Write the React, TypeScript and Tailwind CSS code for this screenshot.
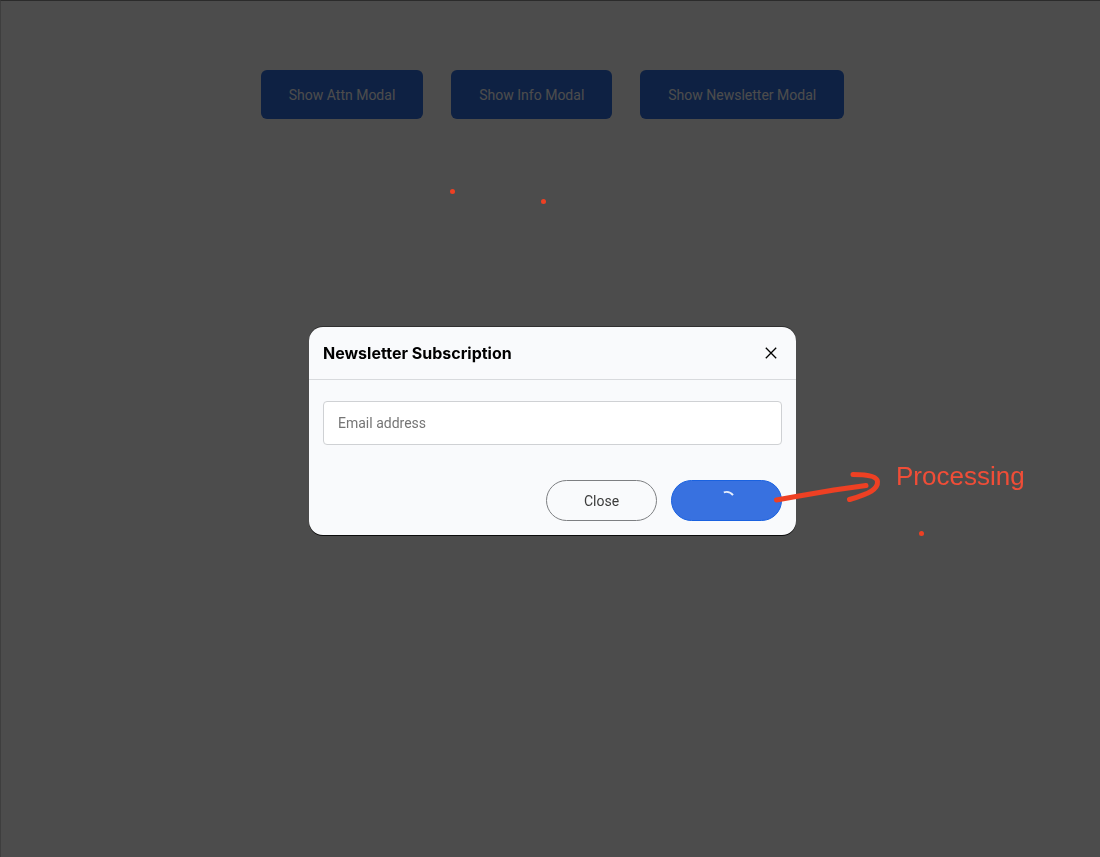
import { useState } from 'react';

const triggers = ['Show Attn Modal', 'Show Info Modal', 'Show Newsletter Modal'];

function Spinner() {
  return (
    <svg viewBox="0 0 20 20" className="size-5" fill="none" aria-hidden="true">
      <path d="M6.8 3.3 Q12.5 1.6 16 6.2" stroke="#e6eefc" strokeWidth="1.9" />
    </svg>
  );
}

function CloseIcon() {
  return (
    <svg viewBox="0 0 12 12" className="size-3" fill="none" stroke="#000" strokeWidth="1.3" aria-hidden="true">
      <path d="M0.8 0.8 L11.2 11.2 M11.2 0.8 L0.8 11.2" />
    </svg>
  );
}

function Dot({ className }: { className: string }) {
  return <span className={`absolute size-[5px] rounded-full bg-[#ee4023] ${className}`} />;
}

function Annotations() {
  return (
    <div className="pointer-events-none absolute inset-0">
      <Dot className="left-[141px] -top-[138px]" />
      <Dot className="left-[232px] -top-[128px]" />
      <Dot className="left-[610px] top-[204px]" />
      <svg
        viewBox="0 0 112 36"
        className="absolute left-[463px] top-[142px] h-9 w-28"
        fill="none"
        stroke="#ee4023"
        strokeWidth="5"
        strokeLinecap="round"
        strokeLinejoin="round"
        aria-hidden="true"
      >
        <path d="M4.5 31 L24 27.5 L62 21 L94 16.5" />
        <path d="M81 5.5 C94 5.5 105 7 105.500 12.5 C106 20 98 24.5 77.500 30.500" />
      </svg>
      <span className="absolute left-[587px] top-[133px] font-['Liberation_Sans',Arial,sans-serif] text-[26px] leading-8 text-[#f04d37]">
        Processing
      </span>
    </div>
  );
}

export default function App() {
  const [email, setEmail] = useState('');

  return (
    <div className="relative min-h-screen bg-white font-[Roboto,sans-serif] text-sm">
      <main className="flex justify-center gap-7 pt-[70px] pl-[5px]">
        {triggers.map((label) => (
          <button key={label} type="button" className="h-[49px] rounded-md bg-[#2f6edf] px-7 text-white">
            {label}
          </button>
        ))}
      </main>

      <div className="fixed inset-0 flex items-center justify-center border-t border-l border-t-[#2b2b2b] border-l-[#3e3e3e] bg-black/70 pt-1 pl-1">
        <section
          role="dialog"
          aria-modal="true"
          aria-labelledby="newsletter-title"
          className="relative w-[487px] max-w-full rounded-[14px] bg-[#f9fafc] shadow-[0_1px_0_0_#0c0c0c,0_-1px_0_0_#303030]"
        >
          <header className="flex h-[53px] items-center justify-between border-b border-[#d8dadd] pr-3 pl-[14px]">
            <h2 id="newsletter-title" className="font-[Inter,sans-serif] text-base font-bold text-black">
              Newsletter Subscription
            </h2>
            <button type="button" aria-label="Close dialog" className="p-[7px]">
              <CloseIcon />
            </button>
          </header>
          <form className="px-[14px] pt-[21px] pb-[14px]" onSubmit={(e) => e.preventDefault()}>
            <input
              type="email"
              aria-label="Email address"
              placeholder="Email address"
              value={email}
              onChange={(e) => setEmail(e.target.value)}
              className="block h-11 w-full rounded border border-[#cfd1d4] bg-white px-[14px] text-black placeholder:text-[#757575]"
            />
            <div className="mt-[35px] flex justify-end gap-[14px]">
              <button type="button" className="h-[41px] w-[111px] rounded-full border border-[#7d7f82] text-[#3c3c3c]">
                Close
              </button>
              <button
                type="submit"
                aria-label="Subscribe"
                aria-busy="true"
                className="flex h-[41px] w-[111px] justify-center rounded-full border border-[#1a62e0] bg-[#3871e0] pt-2"
              >
                <Spinner />
              </button>
            </div>
          </form>
          <Annotations />
        </section>
      </div>
    </div>
  );
}
